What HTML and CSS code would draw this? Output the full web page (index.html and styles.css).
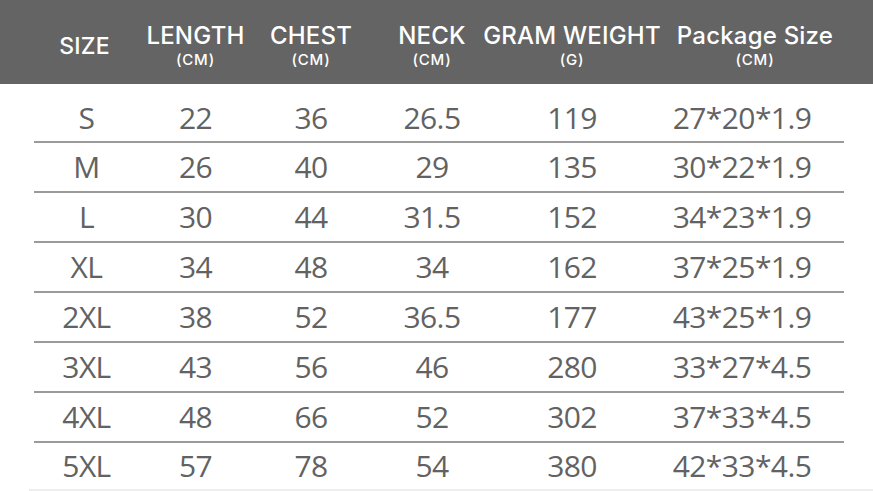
FILE: index.html
```html
<!DOCTYPE html>
<html>
<head>
<meta charset="utf-8">
<link rel="stylesheet" href="styles.css">
</head>
<body>
<div class="header">
  <div class="hgrid">
    <div class="hcell size"><span class="hl">SIZE</span></div>
    <div class="hcell"><span class="hl">LENGTH</span><span class="unit">(CM)</span></div>
    <div class="hcell"><span class="hl">CHEST</span><span class="unit">(CM)</span></div>
    <div class="hcell"><span class="hl">NECK</span><span class="unit">(CM)</span></div>
    <div class="hcell"><span class="hl">GRAM WEIGHT</span><span class="unit">(G)</span></div>
    <div class="hcell pkg"><span class="hl">Package Size</span><span class="unit">(CM)</span></div>
  </div>
</div>
<div class="table">
  <div class="row first"><div>S</div><div>22</div><div>36</div><div>26.5</div><div>119</div><div class="p">27*20*1.9</div></div>
  <div class="row"><div>M</div><div>26</div><div>40</div><div>29</div><div>135</div><div class="p">30*22*1.9</div></div>
  <div class="row"><div>L</div><div>30</div><div>44</div><div>31.5</div><div>152</div><div class="p">34*23*1.9</div></div>
  <div class="row"><div>XL</div><div>34</div><div>48</div><div>34</div><div>162</div><div class="p">37*25*1.9</div></div>
  <div class="row"><div>2XL</div><div>38</div><div>52</div><div>36.5</div><div>177</div><div class="p">43*25*1.9</div></div>
  <div class="row"><div>3XL</div><div>43</div><div>56</div><div>46</div><div>280</div><div class="p">33*27*4.5</div></div>
  <div class="row"><div>4XL</div><div>48</div><div>66</div><div>52</div><div>302</div><div class="p">37*33*4.5</div></div>
  <div class="row last"><div>5XL</div><div>57</div><div>78</div><div>54</div><div>380</div><div class="p">42*33*4.5</div></div>
</div>
<div class="strip"></div>
</body>
</html>
```
FILE: styles.css
```css
html, body {
  margin: 0;
  padding: 0;
  background: #ffffff;
  width: 873px;
  height: 491px;
  overflow: hidden;
}

.header {
  background: #646464;
  height: 84px;
  box-sizing: border-box;
  padding: 22px 29px 0 34px;
  font-family: "Inter", "Open Sans", sans-serif;
  color: #ffffff;
}

.hgrid {
  display: grid;
  grid-template-columns: 105px 113px 118px 124px 156px 194px;
  height: 46px;
}

.hcell {
  display: flex;
  flex-direction: column;
  align-items: center;
  justify-content: flex-start;
  white-space: nowrap;
}

.hcell.size {
  justify-content: center;
  padding-top: 2px;
  padding-right: 4px;
}

.hcell.pkg {
  padding-left: 16px;
}

.hl {
  font-size: 24px;
  font-weight: 500;
  line-height: 28px;
  letter-spacing: 0.2px;
}

.size .hl {
  font-size: 23px;
}

.unit {
  margin-top: 2px;
  font-size: 15px;
  font-weight: 500;
  line-height: 15px;
  letter-spacing: 0.8px;
}

.table {
  margin-left: 34px;
  width: 810px;
  font-family: "Open Sans", sans-serif;
  font-weight: 400;
  color: #626262;
  font-size: 30px;
}

.row {
  display: grid;
  grid-template-columns: 105px 113px 118px 124px 156px 194px;
  height: 48px;
  align-items: center;
  border-bottom: 2px solid #9a9a9a;
}

.row > div {
  text-align: center;
  line-height: 40px;
  letter-spacing: -0.6px;
}

.row > div.p {
  padding-right: 10px;
}

.row.first {
  height: 47px;
  padding-top: 10px;
}

.row.last {
  border-bottom: none;
  height: 46px;
}

.strip {
  margin-left: 29px;
  height: 4px;
  background: #eeeeee;
}
```
